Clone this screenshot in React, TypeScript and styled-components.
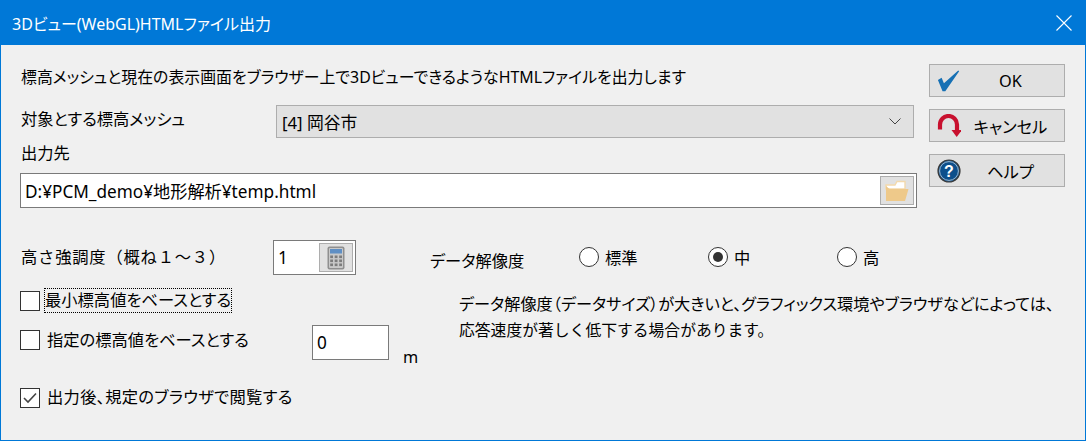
import React from "react";
import styled, { createGlobalStyle } from "styled-components";

const GlobalStyle = createGlobalStyle`
  html, body { margin: 0; padding: 0; background: #f0f0f0; }
  body {
    font-family: "Noto Sans", "Noto Sans CJK JP", sans-serif;
    font-feature-settings: "palt";
    font-size: 16.3px;
    color: #000;
  }
`;

const Window = styled.div`
  width: 1086px;
  height: 441px;
  box-sizing: border-box;
  border: 1px solid #0078d7;
  border-top: 0;
  background: #f0f0f0;
  display: flex;
  flex-direction: column;
  overflow: hidden;
`;

const TitleBar = styled.div`
  height: 45px;
  flex: none;
  background: #0078d7;
  color: #fff;
  display: flex;
  align-items: center;
  justify-content: space-between;
  padding: 0 13px 0 11px;
  font-size: 16px;
`;

const CloseIcon = styled.svg`
  width: 16px;
  height: 16px;
`;

const Upper = styled.div`
  display: flex;
  align-items: flex-start;
  padding: 19px 0 0 19px;
`;

const Main = styled.div`
  width: 897px;
  display: flex;
  flex-direction: column;
`;

const Intro = styled.div`
  height: 26px;
  line-height: 26px;
  padding-left: 1px;
  white-space: nowrap;
  font-size: 15.9px;
`;

const SelectRow = styled.div`
  margin-top: 15px;
  display: flex;
  align-items: center;
  height: 33px;
  padding-left: 1px;
`;

const SelectLabel = styled.div`
  width: 255px;
  flex: none;
  margin-top: -7px;
`;

const Select = styled.div`
  width: 638px;
  height: 33px;
  box-sizing: border-box;
  border: 1px solid #adadad;
  background: #e1e1e1;
  display: flex;
  align-items: center;
  justify-content: space-between;
  padding: 0 12px 0 5px;
  font-size: 16.8px;
`;

const OutputLabel = styled.div`
  margin-top: 3px;
  padding-left: 1px;
  height: 32px;
  line-height: 24px;
`;

const PathBox = styled.div`
  height: 35px;
  box-sizing: border-box;
  border: 1px solid #7a7a7a;
  background: #fff;
  display: flex;
  align-items: center;
  justify-content: space-between;
  padding: 0 2px 0 4px;
  font-size: 17.2px;
`;

const IconButton = styled.div<{ $w: number }>`
  width: ${(p) => p.$w}px;
  height: 29px;
  box-sizing: border-box;
  border: 1px solid #adadad;
  background: #e1e1e1;
  display: flex;
  align-items: center;
  justify-content: center;
`;

const Side = styled.div`
  margin-left: 12px;
  width: 136px;
  display: flex;
  flex-direction: column;
  gap: 12px;
`;

const ActionButton = styled.div`
  height: 33px;
  box-sizing: border-box;
  border: 1px solid #adadad;
  background: #e1e1e1;
  display: flex;
  align-items: center;
  padding-left: 7px;
`;

const ActionIcon = styled.div`
  width: 24px;
  height: 24px;
  flex: none;
  display: flex;
  align-items: center;
  justify-content: center;
`;

const ActionText = styled.div`
  flex: 1;
  text-align: center;
  padding-right: 4px;
`;

const Lower = styled.div`
  margin-top: 32px;
  display: flex;
  align-items: flex-start;
  padding-left: 19px;
`;

const LeftColumn = styled.div`
  width: 410px;
  flex: none;
  display: flex;
  flex-direction: column;
`;

const StrengthRow = styled.div`
  height: 35px;
  display: flex;
  align-items: center;
`;

const StrengthLabel = styled.div`
  width: 253px;
  flex: none;
  font-feature-settings: normal;
  letter-spacing: 0.8px;
  padding-left: 1px;
  box-sizing: border-box;
  margin-top: -3px;
`;

const ValueBox = styled.div<{ $w: number }>`
  width: ${(p) => p.$w}px;
  height: 35px;
  box-sizing: border-box;
  border: 1px solid #7a7a7a;
  background: #fff;
  display: flex;
  align-items: center;
  justify-content: space-between;
  padding: 0 2px 0 4px;
  flex: none;
  font-size: 17.2px;
`;

const CheckRow = styled.div<{ $top: number }>`
  margin-top: ${(p) => p.$top}px;
  display: flex;
  align-items: center;
`;

const Box = styled.div`
  width: 20px;
  height: 20px;
  box-sizing: border-box;
  border: 1px solid #333;
  background: #fff;
  flex: none;
  display: flex;
  align-items: center;
  justify-content: center;
`;

const CheckLabel = styled.div<{ $focus?: boolean; $spacing?: number }>`
  margin-left: ${(p) => (p.$focus ? 4 : 6)}px;
  height: 25px;
  line-height: 24px;
  white-space: nowrap;
  box-sizing: border-box;
  padding: 0 1px;
  letter-spacing: ${(p) => p.$spacing ?? 0}px;
  outline: ${(p) => (p.$focus ? "1px dotted #000" : "none")};
  outline-offset: -1px;
`;

const BaseRow = styled.div`
  margin-top: 12px;
  height: 35px;
  display: flex;
  align-items: flex-start;
`;

const BaseCheck = styled.div`
  width: 292px;
  flex: none;
  display: flex;
  align-items: center;
  margin-top: 5px;
  height: 20px;
`;

const Unit = styled.div`
  margin: 21px 0 0 14px;
  line-height: 22px;
`;

const RightColumn = styled.div`
  flex: 1;
  display: flex;
  flex-direction: column;
`;

const ResolutionRow = styled.div`
  display: flex;
  align-items: center;
  height: 27px;
  margin-top: 3px;
`;

const ResolutionLabel = styled.div`
  width: 149px;
  flex: none;
  margin-top: 7px;
`;

const RadioItem = styled.div`
  width: 129px;
  flex: none;
  display: flex;
  align-items: center;
  gap: 6px;
`;

const Radio = styled.div<{ $on?: boolean }>`
  width: 20px;
  height: 20px;
  box-sizing: border-box;
  border: 1px solid #333;
  border-radius: 50%;
  background: #fff;
  flex: none;
  display: flex;
  align-items: center;
  justify-content: center;
  &::after {
    content: "";
    width: 10px;
    height: 10px;
    border-radius: 50%;
    background: ${(p) => (p.$on ? "#333" : "transparent")};
  }
`;

const Note = styled.div`
  margin: 21px 0 0 29px;
  line-height: 26px;
  white-space: nowrap;
`;

const NoteLine = styled.div<{ $full?: boolean }>`
  font-feature-settings: ${(p) => (p.$full ? "normal" : '"palt"')};
  font-size: ${(p) => (p.$full ? 15.8 : 16.2)}px;
`;

const CheckIcon = () => (
  <svg width="26" height="26" viewBox="0 0 26 26">
    <path
      d="M1 12 L5 9.5 L7.5 15.5 L23 1.5 L24 2.5 L9 24 L6 24 Z"
      fill="#1670b4"
    />
  </svg>
);

const CancelIcon = () => (
  <svg width="24" height="24" viewBox="0 0 24 24">
    <path
      d="M3 15.5 V10.5 a8.5 8.5 0 0 1 17 0 V16"
      fill="none"
      stroke="#c8102e"
      strokeWidth="4.2"
    />
    <path d="M14.5 16 H25 L19.7 23 Z" fill="#c8102e" />
  </svg>
);

const HelpIcon = () => (
  <svg width="24" height="24" viewBox="0 0 24 24">
    <circle cx="12" cy="12" r="11" fill="#0d4f8b" stroke="#3a3a3a" strokeWidth="1.2" />
    <circle cx="12" cy="12" r="9.4" fill="none" stroke="#c7d4e0" strokeWidth="0.8" />
    <text
      x="12"
      y="17.5"
      textAnchor="middle"
      fontFamily="Liberation Sans, sans-serif"
      fontWeight="700"
      fontSize="16"
      fill="#fff"
    >
      ?
    </text>
  </svg>
);

const FolderIcon = () => (
  <svg width="24" height="22" viewBox="0 0 24 22">
    <path d="M1 5 H10 L12 1.5 H20 V9 H1 Z" fill="#fff" stroke="#f3d9ac" strokeWidth="1.4" />
    <path d="M4.5 9 H23.5 L20 21 H1 V6 Z" fill="#eec98a" />
  </svg>
);

const CalcIcon = () => (
  <svg width="18" height="24" viewBox="0 0 18 24">
    <rect x="0.5" y="0.5" width="17" height="23" rx="2" fill="#8f8f8f" />
    <rect x="2" y="2" width="14" height="20" rx="1" fill="#c9c9c9" />
    <rect x="3" y="3" width="12" height="4.5" fill="#5f8fc4" />
    {[9.5, 13.5, 17.5].map((y) =>
      [3.2, 7.7, 12.2].map((x) => (
        <rect key={`${x}-${y}`} x={x} y={y} width="2.8" height="2.6" fill="#7c7c7c" />
      ))
    )}
  </svg>
);

export default function App() {
  return (
    <Window>
      <GlobalStyle />
      <TitleBar>
        <span>3Dビュー(WebGL)HTMLファイル出力</span>
        <CloseIcon viewBox="0 0 16 16">
          <path d="M0.5 0.5 L15.5 15.5 M15.5 0.5 L0.5 15.5" stroke="#fff" strokeWidth="1.1" />
        </CloseIcon>
      </TitleBar>

      <Upper>
        <Main>
          <Intro>標高メッシュと現在の表示画面をブラウザー上で3DビューできるようなHTMLファイルを出力します</Intro>
          <SelectRow>
            <SelectLabel>対象とする標高メッシュ</SelectLabel>
            <Select>
              <span>[4] 岡谷市</span>
              <svg width="12" height="7" viewBox="0 0 12 7">
                <path d="M0.5 0.5 L6 6 L11.5 0.5" fill="none" stroke="#444" strokeWidth="1" />
              </svg>
            </Select>
          </SelectRow>
          <OutputLabel>出力先</OutputLabel>
          <PathBox>
            <span>D:¥PCM_demo¥地形解析¥temp.html</span>
            <IconButton $w={34}>
              <FolderIcon />
            </IconButton>
          </PathBox>
        </Main>
        <Side>
          <ActionButton>
            <ActionIcon>
              <CheckIcon />
            </ActionIcon>
            <ActionText>OK</ActionText>
          </ActionButton>
          <ActionButton>
            <ActionIcon>
              <CancelIcon />
            </ActionIcon>
            <ActionText>キャンセル</ActionText>
          </ActionButton>
          <ActionButton>
            <ActionIcon>
              <HelpIcon />
            </ActionIcon>
            <ActionText>ヘルプ</ActionText>
          </ActionButton>
        </Side>
      </Upper>

      <Lower>
        <LeftColumn>
          <StrengthRow>
            <StrengthLabel>高さ強調度（概ね１～３）</StrengthLabel>
            <ValueBox $w={83}>
              <span>1</span>
              <IconButton $w={34}>
                <CalcIcon />
              </IconButton>
            </ValueBox>
          </StrengthRow>
          <CheckRow $top={13}>
            <Box />
            <CheckLabel $focus>最小標高値をベースとする</CheckLabel>
          </CheckRow>
          <BaseRow>
            <BaseCheck>
              <Box />
              <CheckLabel>指定の標高値をベースとする</CheckLabel>
            </BaseCheck>
            <ValueBox $w={77}>
              <span>0</span>
            </ValueBox>
            <Unit>m</Unit>
          </BaseRow>
          <CheckRow $top={25}>
            <Box>
              <svg width="14" height="12" viewBox="0 0 14 12">
                <path d="M1 6 L5 10 L13 1.5" fill="none" stroke="#444" strokeWidth="1.6" />
              </svg>
            </Box>
            <CheckLabel $spacing={0.3}>出力後、規定のブラウザで閲覧する</CheckLabel>
          </CheckRow>
        </LeftColumn>
        <RightColumn>
          <ResolutionRow>
            <ResolutionLabel>データ解像度</ResolutionLabel>
            <RadioItem>
              <Radio />
              <span>標準</span>
            </RadioItem>
            <RadioItem>
              <Radio $on />
              <span>中</span>
            </RadioItem>
            <RadioItem>
              <Radio />
              <span>高</span>
            </RadioItem>
          </ResolutionRow>
          <Note>
            <NoteLine>データ解像度（データサイズ）が大きいと、グラフィックス環境やブラウザなどによっては、</NoteLine>
            <NoteLine $full>応答速度が著しく低下する場合があります。</NoteLine>
          </Note>
        </RightColumn>
      </Lower>
    </Window>
  );
}
